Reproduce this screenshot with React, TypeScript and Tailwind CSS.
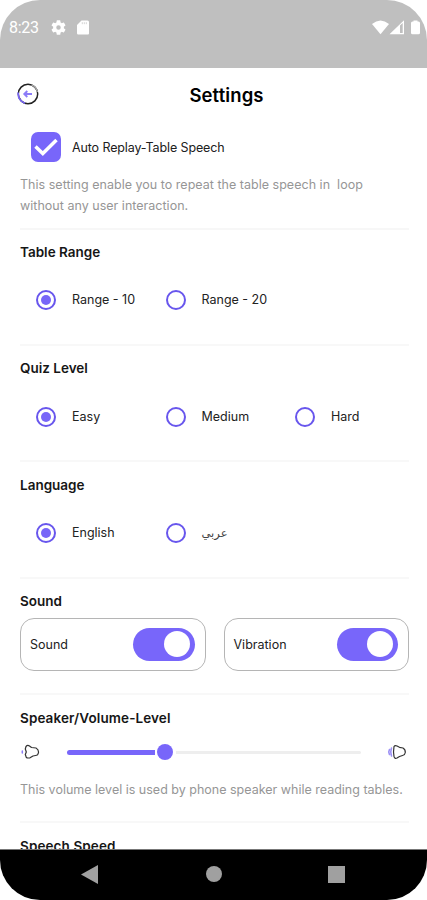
import type { ReactNode } from "react";

function StatusBar() {
  return (
    <header className="flex h-[67.500px] shrink-0 items-start justify-between bg-[#bfbfbf] pt-[18px] pr-[7px] pl-[9px] text-white">
      <div className="flex h-[19px] items-center">
        <span className="w-[42px] font-[Roboto] text-[16px] tracking-[-0.3px] whitespace-nowrap">8:23</span>
        <svg className="h-[15px] w-[15px]" viewBox="2 2 20 20" fill="currentColor" fillRule="evenodd">
          <path d="M19.14 12.94c.04-.3.06-.61.06-.94s-.02-.64-.07-.94l2.03-1.58a.49.49 0 0 0 .12-.61l-1.92-3.32a.49.49 0 0 0-.59-.22l-2.39.96a7 7 0 0 0-1.62-.94l-.36-2.54a.48.48 0 0 0-.48-.41h-3.84a.48.48 0 0 0-.47.41l-.36 2.54a7.4 7.4 0 0 0-1.62.94l-2.39-.96a.48.48 0 0 0-.59.22L2.74 8.87a.48.48 0 0 0 .12.61l2.03 1.58a6 6 0 0 0 0 1.88l-2.03 1.58a.49.49 0 0 0-.12.61l1.92 3.32c.12.22.37.29.59.22l2.39-.96c.5.38 1.03.7 1.62.94l.36 2.54c.05.24.24.41.48.41h3.84c.24 0 .44-.17.47-.41l.36-2.54a7.4 7.4 0 0 0 1.62-.94l2.39.96c.22.08.47 0 .59-.22l1.92-3.32a.48.48 0 0 0-.12-.61zM12 15a3 3 0 1 1 0-6 3 3 0 0 1 0 6z" />
        </svg>
        <svg className="ml-[11px] h-[15px] w-[12px]" viewBox="0 0 12 15">
          <path d="M4.5.5H10.5Q12 .5 12 2V13.5Q12 14.5 11 14.5H1.2Q0 14.5 0 13.3V5Z" fill="white" />
          <path d="M5.3 2.2V4.2M7.3 2.2V4.2M9.3 2.2V4.2" stroke="#d5d5d5" strokeWidth="1" />
        </svg>
      </div>
      <div className="flex h-[19px] items-center">
        <svg className="h-[15px] w-[17px]" viewBox="0 0 17 15" fill="white"><path d="M0 4Q8.500 -3 17 4L8.500 14.300Z" /></svg>
        <svg className="h-[15px] w-[16px]" viewBox="0 0 16 15" fill="white"><path fillRule="evenodd" d="M.5 14.200L15 .3V14.200ZM11 5.500V13H13.700V3Z" /></svg>
        <svg className="ml-[6px] h-[15px] w-[9px]" viewBox="0 0 9 15" fill="white"><path d="M2.500 .4H6.500V1.500H7.500Q9 1.500 9 3V12.800Q9 14.300 7.500 14.300H1.500Q0 14.300 0 12.800V3Q0 1.500 1.500 1.500H2.500Z" /></svg>
      </div>
    </header>
  );
}

function Choice({ label, selected, arabic }: { label: string; selected?: boolean; arabic?: boolean }) {
  return (
    <label className="flex w-[129.500px] shrink-0 items-center">
      <span className="flex size-[20px] shrink-0 items-center justify-center rounded-full border-2 border-[#6856ed]">
        {selected && <span className="size-[10px] rounded-full bg-[#7866f8]" />}
      </span>
      {arabic ? (
        <span dir="rtl" className="ml-[16px] h-[20px] font-['DejaVu_Sans',sans-serif] text-[11.500px] leading-[20px] text-[#444]">عربي</span>
      ) : (
        <span className="ml-[16px] pt-px text-[12.500px] whitespace-nowrap text-[#222]">{label}</span>
      )}
    </label>
  );
}

function SectionTitle({ children }: { children: ReactNode }) {
  return <h2 className="text-[13.500px] leading-[20px] font-semibold whitespace-nowrap text-[#161616]">{children}</h2>;
}

function ChoiceSection({ title, children }: { title: string; children: ReactNode }) {
  return (
    <section className="h-[116.400px] shrink-0 border-b-2 border-[#f8f8f8] pt-[12.300px]">
      <SectionTitle>{title}</SectionTitle>
      <div className="mt-[28.500px] flex h-[20px] pl-[16px]">{children}</div>
    </section>
  );
}

function Toggle({ label }: { label: string }) {
  return (
    <div className="flex h-[53px] w-[185.500px] items-center justify-between rounded-[14px] border border-[#b5b5b5] pr-[10px] pl-[9px]">
      <span className="pt-[2px] text-[12.500px] text-[#222]">{label}</span>
      <span className="flex h-[33.500px] w-[61.500px] items-center justify-end rounded-full bg-[#7866fa] pr-[5px]">
        <span className="size-[26px] rounded-full bg-white" />
      </span>
    </div>
  );
}

function Speaker({ loud }: { loud?: boolean }) {
  return (
    <svg className="h-[16px] w-[20px] shrink-0" viewBox="0 0 20 16" fill="none" strokeLinecap="round" strokeLinejoin="round">
      <path
        d={loud
          ? "M7 2.500Q8 1 10 2L12.500 3.300L16 4Q18.500 5.500 18.300 8.500Q18 11 15.500 11.500L12.500 12.500L10 14Q7.500 15 7 12.500L6.500 8Z"
          : "M6 2.500Q7.500 .7 9.500 2L11.500 3.500L16 4Q18.800 5.500 18.500 8.500Q18 11.500 15.500 11.500L13 12L10 13.800Q6 14.500 6 12.500L5.300 10.500L6.300 8L5.300 5Z"}
        stroke="#333"
        strokeWidth="1.200"
      />
      {loud ? (
        <path d="M2.500 5.500Q1 8 2.500 10.500M4.500 4Q3 8 4.500 12" stroke="#9d91f5" strokeWidth="1.600" />
      ) : (
        <path d="M2.300 7V9" stroke="#8b7bf7" strokeWidth="1.500" />
      )}
    </svg>
  );
}

export default function App() {
  return (
    <div className="flex h-[900px] w-[427px] flex-col overflow-hidden rounded-[40px] bg-white font-[Inter,sans-serif]">
      <StatusBar />
      <main className="flex min-h-0 flex-1 flex-col overflow-hidden pr-[18px] pl-[20px]">
        <div className="grid h-[53.500px] shrink-0 grid-cols-[16px_1fr_16px] items-center">
          <svg className="-ml-[3px] h-[22px] w-[22px]" viewBox="0 0 22 22" fill="none">
            <circle cx="11" cy="11" r="9.700" stroke="#222" strokeWidth="1.500" />
            <path d="M14.500 1.900A9.700 9.700 0 0 1 20.500 9" stroke="#aaa" strokeWidth="1.500" />
            <path d="M1.300 9.500A9.700 9.700 0 0 0 8 20.200" stroke="#7966f8" strokeWidth="1.700" />
            <path d="M15 11H7.500M10.300 8L7.300 11L10.300 14" stroke="#8c7cf8" strokeWidth="1.900" />
          </svg>
          <h1 className="pt-px pl-[24px] text-center text-[18.500px] leading-[24px] font-semibold tracking-[0.1px] text-black">Settings</h1>
        </div>
        <section className="h-[108.500px] shrink-0 border-b-2 border-[#f7f7f7] pt-[11px]">
          <label className="flex h-[30px] items-center pl-[11px]">
            <span className="flex size-[30px] items-center justify-center rounded-[7px] bg-[#7866fa]">
              <svg className="size-[30px]" viewBox="0 0 30 30" fill="none"><path d="M4.500 14.500L11.800 21.500L25.500 8" stroke="white" strokeWidth="3.500" /></svg>
            </span>
            <span className="ml-[11px] pt-[2px] text-[12.500px] tracking-[-0.120px] whitespace-nowrap text-[#202020]">Auto Replay-Table Speech</span>
          </label>
          <p className="mt-[12px] text-[12.500px] leading-[21px] tracking-[0.020px] whitespace-nowrap text-[#969696]">
            This setting enable you to repeat the table speech in&nbsp; loop<br />without any user interaction.
          </p>
        </section>
        <ChoiceSection title="Table Range"><Choice label="Range - 10" selected /><Choice label="Range - 20" /></ChoiceSection>
        <ChoiceSection title="Quiz Level"><Choice label="Easy" selected /><Choice label="Medium" /><Choice label="Hard" /></ChoiceSection>
        <ChoiceSection title="Language"><Choice label="English" selected /><Choice label="عربي" arabic /></ChoiceSection>
        <section className="h-[116px] shrink-0 border-b-2 border-[#f8f8f8] pt-[12px]">
          <SectionTitle>Sound</SectionTitle>
          <div className="mt-[7.300px] flex justify-between"><Toggle label="Sound" /><Toggle label="Vibration" /></div>
        </section>
        <section className="h-[128.500px] shrink-0 border-b-2 border-[#f8f8f8] pt-[13px]">
          <SectionTitle><span className="tracking-[0.100px]">Speaker/Volume-Level</span></SectionTitle>
          <div className="mt-[16px] flex h-[17px] items-center">
            <Speaker />
            <div className="ml-[27px] flex w-[294px] items-center">
              <span className="h-[5px] w-[88px] rounded-l-full bg-[#7866fa]" />
              <span className="ml-[2px] size-[16px] rounded-full bg-[#7866fa]" />
              <span className="ml-[3px] h-[3px] flex-1 rounded-r-full bg-[#eee]" />
            </div>
            <span className="ml-[26px] flex"><Speaker loud /></span>
          </div>
          <p className="mt-[18px] text-[12.500px] leading-[21px] whitespace-nowrap text-[#969696]">This volume level is used by phone speaker while reading tables.</p>
        </section>
        <section className="shrink-0 pt-[13px]"><SectionTitle><span className="tracking-[0.100px]">Speech Speed</span></SectionTitle></section>
      </main>
      <nav className="flex h-[51.500px] shrink-0 items-start border-t border-[#777] bg-black pt-[15px] pl-[81px]">
        <svg className="h-[19px] w-[17px]" viewBox="0 0 17 19"><path d="M0 9.500L17 0V19Z" fill="#a0a0a0" /></svg>
        <span className="mt-px ml-[108px] size-[16px] rounded-full bg-[#a0a0a0]" />
        <span className="mt-px ml-[106px] size-[17px] bg-[#a0a0a0]" />
      </nav>
    </div>
  );
}
